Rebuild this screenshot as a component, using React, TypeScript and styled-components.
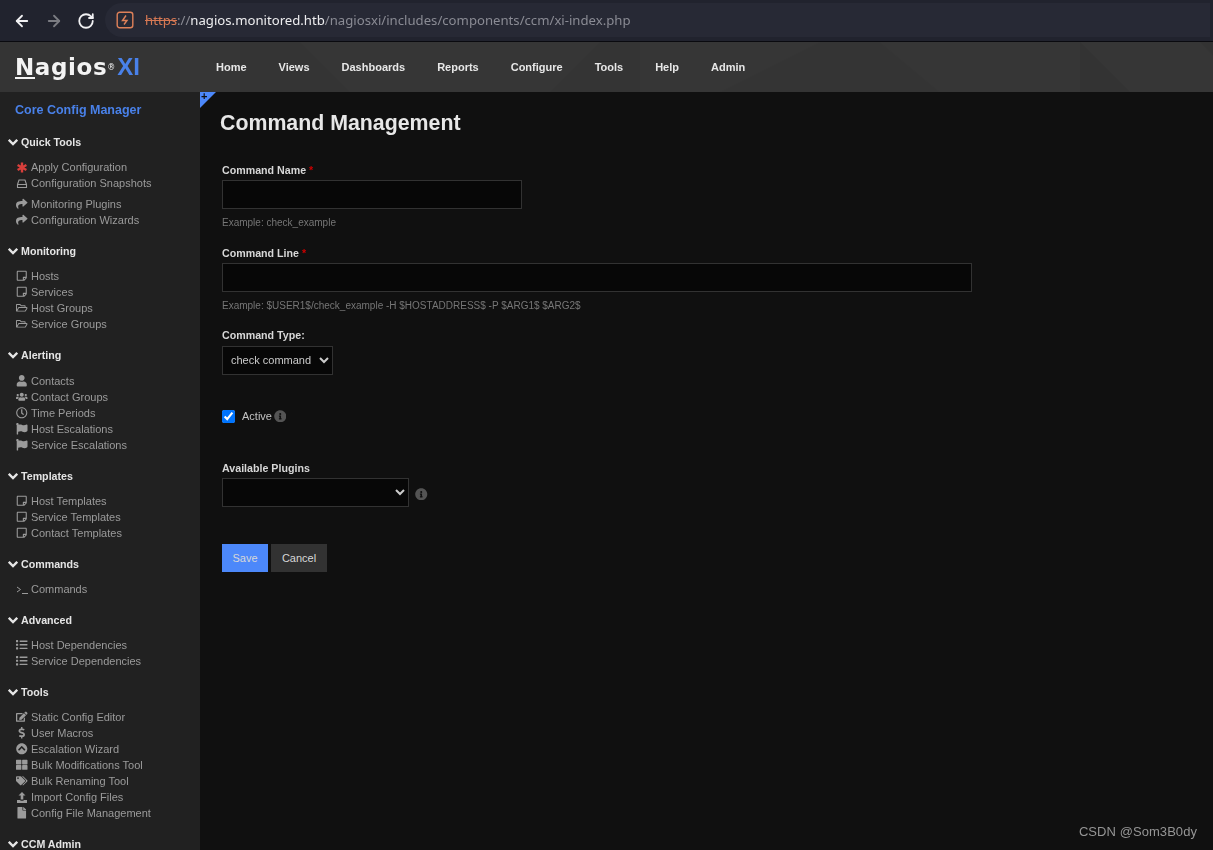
import React from "react";
import styled, { createGlobalStyle } from "styled-components";
import { ArrowLeft, ArrowRight, RotateCw } from "lucide-react";
import {
  FaShare, FaRegStickyNote, FaRegFolderOpen, FaUser, FaUsers, FaRegClock,
  FaFlag, FaList, FaEdit, FaDollarSign, FaChevronCircleUp, FaThLarge, FaTags, FaFile, FaInfoCircle,
} from "react-icons/fa";

const Global = createGlobalStyle`
  html, body { margin: 0; padding: 0; height: 100%; background: #111; }
  body { font-family: "Liberation Sans", Arial, sans-serif; overflow: hidden; }
  * { box-sizing: border-box; }
`;

const Page = styled.div`
  position: relative;
  width: 1213px;
  height: 850px;
  display: flex;
  flex-direction: column;
  overflow: hidden;
  opacity: 0.999;
`;

const BrowserBar = styled.div`
  height: 42px;
  flex: none;
  display: flex;
  align-items: center;
  background: #22242f;
  border-bottom: 1px solid #0b0b10;
  padding-left: 13px;
`;

const ToolButton = styled.span<{ $dim?: boolean }>`
  width: 18px;
  height: 18px;
  margin-right: 14px;
  display: flex;
  color: ${(p) => (p.$dim ? "#7c7d83" : "#f2f2f4")};
`;

const AddressBox = styled.div`
  width: 1105px;
  height: 34px;
  margin-left: -4px;
  margin-top: -1px;
  display: flex;
  align-items: center;
  padding-left: 11px;
  background: #282a36;
  border-radius: 17px 0 0 17px;
  font: 13.17px "Noto Sans", sans-serif;
  color: #8b8c95;
`;

const SiteIcon = styled.svg`
  width: 18px;
  height: 18px;
  margin-right: 11px;
  flex: none;
`;

const Https = styled.span`
  color: #d97a55;
  text-decoration: line-through;
`;

const Host = styled.span`
  color: #eeeef0;
`;

const TopNav = styled.nav`
  position: relative;
  height: 50px;
  flex: none;
  display: flex;
  align-items: center;
  background: #373737;
  overflow: hidden;
`;

const NavPattern = styled.svg`
  position: absolute;
  left: 0;
  top: 0;
`;

const Logo = styled.div`
  position: relative;
  width: 216px;
  flex: none;
  padding-left: 15px;
  font: bold 23px "DejaVu Sans", sans-serif;
  color: #f4f4f4;
  letter-spacing: 0.6px;
  display: flex;
  align-items: baseline;
`;

const LogoN = styled.span`
  border-bottom: 2px solid #f4f4f4;
  line-height: 19px;
`;

const Registered = styled.sup`
  font-size: 8px;
  font-weight: normal;
  line-height: 0;
  position: relative;
  top: -5px;
  letter-spacing: 0;
`;

const LogoXI = styled.span`
  color: #4a82ea;
  margin-left: 2px;
  font: bold 24px "Liberation Sans", sans-serif;
  letter-spacing: 0;
`;

const NavLinks = styled.div`
  position: relative;
  display: flex;
  gap: 32px;
`;

const NavLink = styled.a`
  font: bold 11px "Liberation Sans", sans-serif;
  color: #e8e8e8;
`;

const Body = styled.div`
  flex: 1;
  min-height: 0;
  display: flex;
`;

const Sidebar = styled.aside`
  width: 200px;
  flex: none;
  background: #222;
  padding: 10px 0 0 8px;
  overflow: hidden;
`;

const SideTitle = styled.div`
  font: bold 12.5px/16px "Liberation Sans", sans-serif;
  color: #4a82ea;
  margin: 0 0 16px 7px;
`;

const Section = styled.section`
  margin-bottom: 15px;
`;

const SectionHead = styled.div<{ $gap?: number }>`
  display: flex;
  align-items: center;
  gap: 3px;
  height: 16px;
  margin-bottom: ${(p) => p.$gap ?? 9}px;
  font: bold 10.67px/16px "Liberation Sans", sans-serif;
  color: #e6e6e6;
`;

const Chevron = styled.svg`
  width: 10px;
  height: 8px;
`;

const Group = styled.ul`
  list-style: none;
  margin: 0 0 5px;
  padding: 0 0 0 8px;
  &:last-child { margin-bottom: 0; }
`;

const Item = styled.li`
  display: flex;
  align-items: center;
  height: 16px;
  font: 11px/16px "Liberation Sans", sans-serif;
  color: #9c9c9c;
`;

const ItemIcon = styled.span<{ $red?: boolean }>`
  width: 15px;
  flex: none;
  display: flex;
  justify-content: center;
  padding-right: 3px;
  color: ${(p) => (p.$red ? "#d9403c" : "#9c9c9c")};
  font-size: 11.5px;
`;

const DrawnIcon = styled.svg`
  width: 12px;
  height: 11px;
`;

const Main = styled.main`
  position: relative;
  flex: 1;
  background: #111;
  padding: 17px 0 0 22px;
`;

const Corner = styled.div`
  position: absolute;
  left: 0;
  top: 0;
  width: 16px;
  height: 16px;
  background: #4d89fb;
  clip-path: polygon(0 0, 100% 0, 0 100%);
  font: bold 11px/9px "Liberation Sans", sans-serif;
  color: #111;
  padding-left: 1px;
`;

const Title = styled.h1`
  margin: 0 0 24px -2px;
  font: bold 21.33px/29px "Liberation Sans", sans-serif;
  color: #e8e8e8;
`;

const Label = styled.label`
  display: block;
  font: bold 10.67px/16px "Liberation Sans", sans-serif;
  color: #d8d8d8;
  margin-bottom: 2px;
`;

const Required = styled.span`
  color: #c00;
`;

const TextInput = styled.input<{ $w: number }>`
  display: block;
  width: ${(p) => p.$w}px;
  height: 29px;
  background: #080808;
  border: 1px solid #333;
  outline: none;
`;

const Help = styled.div`
  margin: 7px 0 15px;
  font: 10px/14px "Liberation Sans", sans-serif;
  color: #777;
`;

const TypeLabel = styled(Label)`
  margin-top: -1px;
  margin-bottom: 3px;
`;

const Select = styled.select<{ $w: number }>`
  display: block;
  width: ${(p) => p.$w}px;
  height: 29px;
  background: #080808;
  color: #ccc;
  border: 1px solid #333;
  border-radius: 0;
  padding: 0 4px 2px;
  font: 11px "Liberation Sans", sans-serif;
  color-scheme: dark;
  outline: none;
`;

const ActiveRow = styled.div`
  display: flex;
  align-items: center;
  height: 16px;
  margin: 33px 0 36px;
  font: 11px/16px "Liberation Sans", sans-serif;
  color: #c4c4c4;
`;

const Check = styled.input`
  width: 13px;
  height: 13px;
  margin: 0 7px 0 0;
  accent-color: #0075ff;
  color-scheme: dark;
`;

const Info = styled.span<{ $gap: number; $top?: number }>`
  display: flex;
  margin-left: ${(p) => p.$gap}px;
  margin-top: ${(p) => p.$top ?? 0}px;
  color: #555;
  font-size: 12.5px;
`;

const PluginRow = styled.div`
  display: flex;
  align-items: center;
`;

const Buttons = styled.div`
  display: flex;
  gap: 3px;
  margin-top: 37px;
`;

const Button = styled.button<{ $primary?: boolean }>`
  height: 28px;
  padding: 0;
  width: ${(p) => (p.$primary ? 46 : 56)}px;
  border: none;
  border-radius: 0;
  background: ${(p) => (p.$primary ? "#4d89fb" : "#333")};
  color: #d8d8d8;
  font: 11px "Liberation Sans", sans-serif;
`;

const Watermark = styled.div`
  position: absolute;
  right: 16px;
  bottom: 9px;
  font: 13px/18px "Liberation Sans", sans-serif;
  letter-spacing: 0.06px;
  color: #969696;
`;

type Entry = { icon: React.ReactNode; label: string; red?: boolean };

const Star = () => (
  <DrawnIcon viewBox="0 0 12 11" fill="none" stroke="currentColor" strokeWidth="2.4">
    <path d="M6 .5v10M1.600 3 10.400 8M10.400 3 1.600 8" />
  </DrawnIcon>
);

const Prompt = () => (
  <DrawnIcon viewBox="0 0 12 11" fill="none" stroke="currentColor" strokeWidth="1">
    <path d="M1 3 4.500 5.500 1 8M6 9.500h6" />
  </DrawnIcon>
);

const Drive = () => (
  <DrawnIcon viewBox="0 0 12 11" fill="none" stroke="currentColor" strokeWidth="1.1">
    <path d="M1.500 6.500 3 2h6l1.500 4.500M1.500 6.500h9v3h-9z" />
  </DrawnIcon>
);

const UploadIcon = () => (
  <DrawnIcon viewBox="0 0 12 11" fill="currentColor">
    <path d="M6 0 9.500 3.600H7.300V7.400H4.700V3.600H2.500zM1 8h3.400v.8h3.200V8H11v3H1z" />
  </DrawnIcon>
);

const sections: { head: string; gap?: number; groups: Entry[][] }[] = [
  {
    head: "Quick Tools",
    groups: [
      [
        { icon: <Star />, label: "Apply Configuration", red: true },
        { icon: <Drive />, label: "Configuration Snapshots" },
      ],
      [
        { icon: <FaShare />, label: "Monitoring Plugins" },
        { icon: <FaShare />, label: "Configuration Wizards" },
      ],
    ],
  },
  {
    head: "Monitoring",
    groups: [[
      { icon: <FaRegStickyNote />, label: "Hosts" },
      { icon: <FaRegStickyNote />, label: "Services" },
      { icon: <FaRegFolderOpen />, label: "Host Groups" },
      { icon: <FaRegFolderOpen />, label: "Service Groups" },
    ]],
  },
  {
    head: "Alerting",
    gap: 10,
    groups: [[
      { icon: <FaUser />, label: "Contacts" },
      { icon: <FaUsers />, label: "Contact Groups" },
      { icon: <FaRegClock />, label: "Time Periods" },
      { icon: <FaFlag />, label: "Host Escalations" },
      { icon: <FaFlag />, label: "Service Escalations" },
    ]],
  },
  {
    head: "Templates",
    groups: [[
      { icon: <FaRegStickyNote />, label: "Host Templates" },
      { icon: <FaRegStickyNote />, label: "Service Templates" },
      { icon: <FaRegStickyNote />, label: "Contact Templates" },
    ]],
  },
  { head: "Commands", groups: [[{ icon: <Prompt />, label: "Commands" }]] },
  {
    head: "Advanced",
    groups: [[
      { icon: <FaList />, label: "Host Dependencies" },
      { icon: <FaList />, label: "Service Dependencies" },
    ]],
  },
  {
    head: "Tools",
    groups: [[
      { icon: <FaEdit />, label: "Static Config Editor" },
      { icon: <FaDollarSign />, label: "User Macros" },
      { icon: <FaChevronCircleUp />, label: "Escalation Wizard" },
      { icon: <FaThLarge />, label: "Bulk Modifications Tool" },
      { icon: <FaTags />, label: "Bulk Renaming Tool" },
      { icon: <UploadIcon />, label: "Import Config Files" },
      { icon: <FaFile />, label: "Config File Management" },
    ]],
  },
  { head: "CCM Admin", groups: [] },
];

const navItems = ["Home", "Views", "Dashboards", "Reports", "Configure", "Tools", "Help", "Admin"];

export default function App() {
  return (
    <Page>
      <Global />
      <BrowserBar>
        <ToolButton><ArrowLeft size={18} strokeWidth={2.4} /></ToolButton>
        <ToolButton $dim><ArrowRight size={18} strokeWidth={2.4} /></ToolButton>
        <ToolButton><RotateCw size={18} strokeWidth={2.4} /></ToolButton>
        <AddressBox>
          <SiteIcon viewBox="0 0 18 18" fill="none" stroke="#e0825a" strokeWidth="1.4">
            <rect x="1.2" y="1.2" width="15.6" height="15.6" rx="2.5" />
            <path d="M10 4.500 6.500 9.500H11L8 13.500" />
          </SiteIcon>
          <span>
            <Https>https</Https>://<Host>nagios.monitored.htb</Host>/nagiosxi/includes/components/ccm/xi-index.php
          </span>
        </AddressBox>
      </BrowserBar>
      <TopNav>
        <NavPattern width="1213" height="50" viewBox="0 0 1213 50">
          <path d="M0 0h180v50H0z" fill="#000" opacity=".025" />
          <path d="M240 0h60l50 50h-110z" fill="#000" opacity=".02" />
          <path d="M550 50l50-50h40v50z" fill="#000" opacity=".02" />
          <path d="M720 50l100-50h60l60 50z" fill="#000" opacity=".02" />
          <path d="M1080 0l50 50h-50zM1200 0h13v14z" fill="#000" opacity=".04" />
        </NavPattern>
        <Logo>
          <LogoN>N</LogoN>agios<Registered>®</Registered>
          <LogoXI>XI</LogoXI>
        </Logo>
        <NavLinks>
          {navItems.map((n) => <NavLink key={n}>{n}</NavLink>)}
        </NavLinks>
      </TopNav>
      <Body>
        <Sidebar>
          <SideTitle>Core Config Manager</SideTitle>
          {sections.map((s) => (
            <Section key={s.head}>
              <SectionHead $gap={s.gap}>
                <Chevron viewBox="0 0 10 8" fill="none" stroke="currentColor" strokeWidth="2.3">
                  <path d="M.8 1.800 5 6 9.200 1.800" />
                </Chevron>
                {s.head}
              </SectionHead>
              {s.groups.map((g, i) => (
                <Group key={i}>
                  {g.map((e) => (
                    <Item key={e.label}>
                      <ItemIcon $red={e.red}>{e.icon}</ItemIcon>
                      {e.label}
                    </Item>
                  ))}
                </Group>
              ))}
            </Section>
          ))}
        </Sidebar>
        <Main>
          <Corner>+</Corner>
          <Title>Command Management</Title>
          <Label>Command Name <Required>*</Required></Label>
          <TextInput $w={300} />
          <Help>Example: check_example</Help>
          <Label>Command Line <Required>*</Required></Label>
          <TextInput $w={750} />
          <Help>Example: $USER1$/check_example -H $HOSTADDRESS$ -P $ARG1$ $ARG2$</Help>
          <TypeLabel>Command Type:</TypeLabel>
          <Select $w={111} defaultValue="check"><option value="check">check command</option></Select>
          <ActiveRow>
            <Check type="checkbox" defaultChecked />
            Active
            <Info $gap={2}><FaInfoCircle /></Info>
          </ActiveRow>
          <Label>Available Plugins</Label>
          <PluginRow>
            <Select $w={187}><option></option></Select>
            <Info $gap={6} $top={3}><FaInfoCircle /></Info>
          </PluginRow>
          <Buttons>
            <Button $primary>Save</Button>
            <Button>Cancel</Button>
          </Buttons>
        </Main>
      </Body>
      <Watermark>CSDN @Som3B0dy</Watermark>
    </Page>
  );
}
